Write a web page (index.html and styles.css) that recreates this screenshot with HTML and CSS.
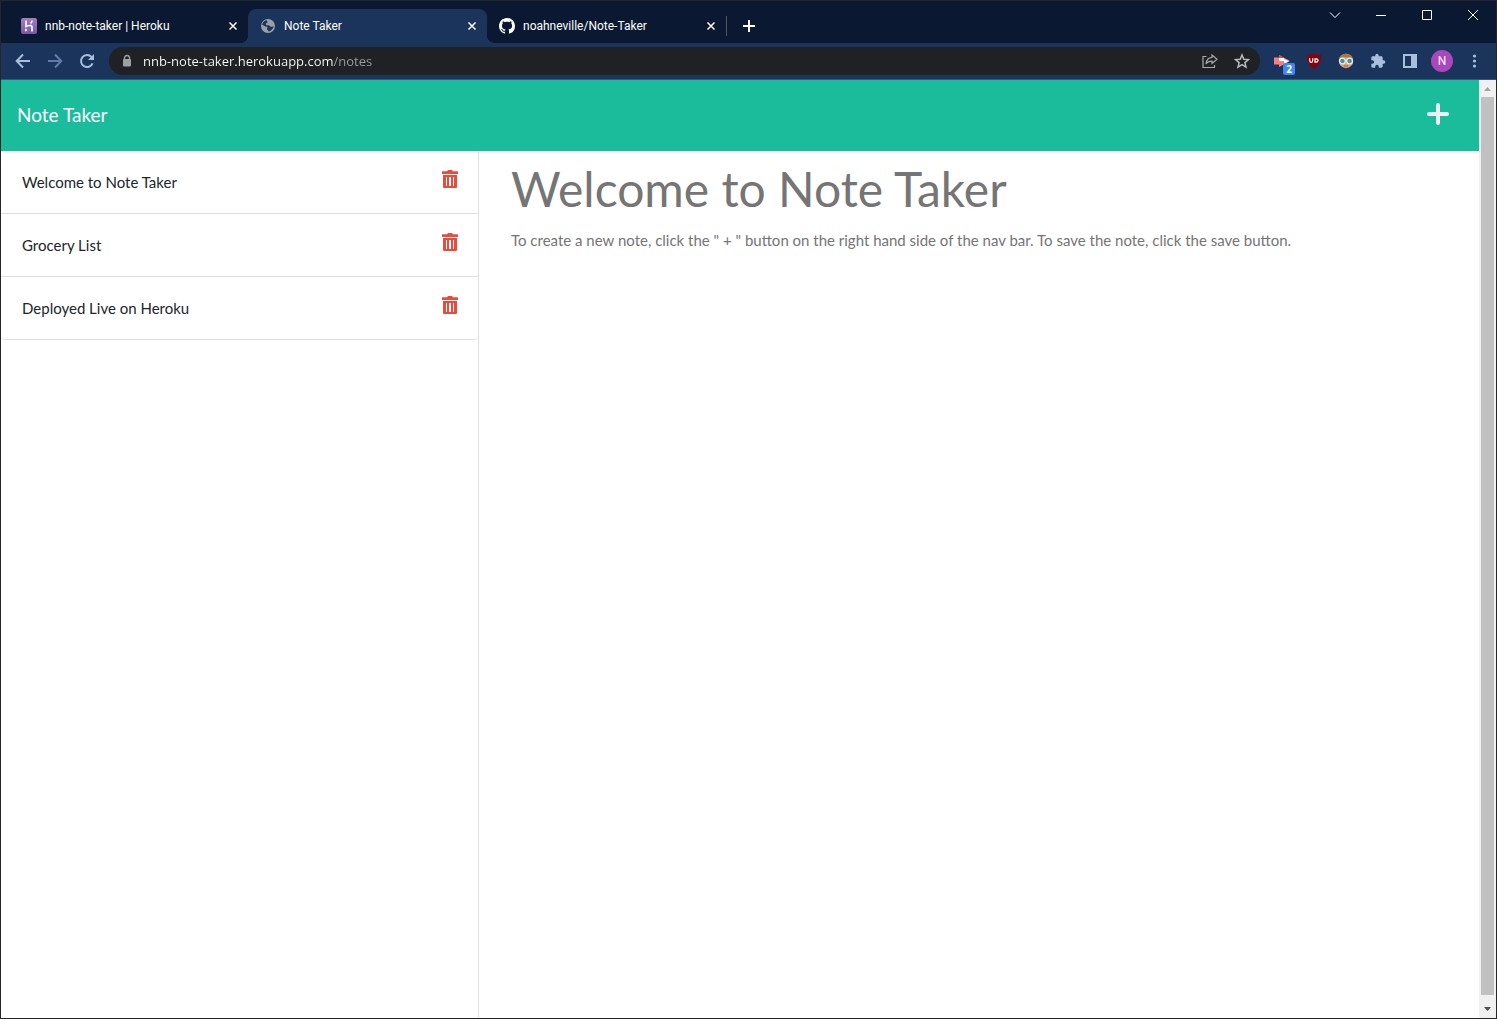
FILE: index.html
```html
<!DOCTYPE html>
<html lang="en">
<head>
<meta charset="utf-8">
<title>Note Taker</title>
<link rel="stylesheet" href="styles.css">
</head>
<body>
<div class="window">
  <header class="tab-strip">
    <div class="tabs">
      <div class="tab">
        <svg class="icon" viewBox="0 0 16 16"><defs><linearGradient id="hk" x1="0" y1="0" x2="0" y2="1"><stop offset="0" stop-color="#a37fc0"/><stop offset="1" stop-color="#79589f"/></linearGradient></defs><rect width="16" height="16" rx="2" fill="url(#hk)"/><path d="M5 2.500v6c1.500-.8 6-2.200 6 .5v4.500M11 2.500c0 1.200-.5 2-1.300 3" fill="none" stroke="#fff" stroke-width="1.600"/><path d="M4.200 10.300l2.300 1.700-2.300 1.700z" fill="#fff"/></svg>
        <span class="tab-title">nnb-note-taker | Heroku</span>
        <button class="tab-close" aria-label="Close tab"><svg viewBox="0 0 16 16"><path d="M4.500 4.500l7 7M11.500 4.500l-7 7"/></svg></button>
      </div>
      <div class="tab tab-active">
        <svg class="icon" viewBox="0 0 16 16"><circle cx="8" cy="8" r="7" fill="#9aa0a6"/><path d="M6.500 2.300c.3 1 1.200 1 1 1.900-.2.800-1.400.6-1.700 1.400-.2.700.5 1 .4 1.700H8.500c.9 0 1 .9 1.700 1.100.8.200 1.100 0 1.600.6.500-.5 1-.8 1.800-.7-.4 2.700-2.600 4.900-5.400 5.200v-1.300c-.6-.2-1.300-.5-1.200-1.400.1-.7.700-.9.500-1.500-.2-.7-1.200-.5-2-.9L2.200 6.700C2.700 4.500 4.300 2.800 6.500 2.300z" fill="#1a345b"/></svg>
        <span class="tab-title">Note Taker</span>
        <button class="tab-close" aria-label="Close tab"><svg viewBox="0 0 16 16"><path d="M4.500 4.500l7 7M11.500 4.500l-7 7"/></svg></button>
      </div>
      <div class="tab">
        <svg class="icon" viewBox="0 0 16 16"><path fill="#fff" d="M8 0C3.580 0 0 3.580 0 8c0 3.540 2.290 6.530 5.470 7.590.4.070.55-.17.55-.38 0-.19-.01-.82-.01-1.490-2.010.37-2.530-.49-2.690-.94-.09-.23-.48-.94-.82-1.130-.28-.15-.68-.52-.01-.53.63-.01 1.080.58 1.230.82.72 1.210 1.870.87 2.330.66.07-.52.28-.87.51-1.070-1.780-.2-3.640-.89-3.640-3.950 0-.87.31-1.590.82-2.150-.08-.2-.36-1.020.08-2.120 0 0 .67-.21 2.200.82.64-.18 1.320-.27 2-.27s1.360.09 2 .27c1.530-1.040 2.200-.82 2.200-.82.44 1.100.16 1.920.08 2.120.51.56.82 1.270.82 2.150 0 3.070-1.870 3.750-3.650 3.950.29.25.54.73.54 1.480 0 1.070-.01 1.930-.01 2.200 0 .21.15.46.55.38A8.010 8.010 0 0 0 16 8c0-4.420-3.580-8-8-8z"/></svg>
        <span class="tab-title">noahneville/Note-Taker</span>
        <button class="tab-close" aria-label="Close tab"><svg viewBox="0 0 16 16"><path d="M4.500 4.500l7 7M11.500 4.500l-7 7"/></svg></button>
      </div>
      <span class="tab-separator"></span>
      <button class="new-tab" aria-label="New tab"><svg viewBox="0 0 16 16"><path d="M8 2v12M2 8h12"/></svg></button>
    </div>
    <div class="window-controls">
      <button aria-label="Search tabs"><svg viewBox="0 0 12 12"><path d="M1 3.500l5 5 5-5"/></svg></button>
      <button aria-label="Minimize"><svg viewBox="0 0 12 12"><path d="M1 6.500h10"/></svg></button>
      <button aria-label="Maximize"><svg viewBox="0 0 12 12"><path d="M1.500 1.500h9v9h-9z"/></svg></button>
      <button aria-label="Close"><svg viewBox="0 0 12 12"><path d="M1 1l10 10M11 1L1 11"/></svg></button>
    </div>
  </header>

  <div class="toolbar">
    <div class="tools">
      <button aria-label="Back"><svg viewBox="0 0 16 16"><path d="M15 8H2M8 1.500L1.700 8 8 14.500" fill="none" stroke="#a9bfe0" stroke-width="2"/></svg></button>
      <button aria-label="Forward"><svg viewBox="0 0 16 16"><path d="M1 8h13M8 1.500L14.300 8 8 14.500" fill="none" stroke="#5f7ba6" stroke-width="2"/></svg></button>
      <button aria-label="Reload"><svg viewBox="0 0 16 16"><path d="M13.600 10.300A6 6 0 1 1 12.500 4" fill="none" stroke="#a9bfe0" stroke-width="2"/><path d="M15 1v6H9z" fill="#a9bfe0"/></svg></button>
    </div>
    <div class="omnibox">
      <svg class="lock" viewBox="0 0 10 14"><path d="M2.500 6V4a2.500 2.500 0 0 1 5 0v2" fill="none" stroke="#9aa0a6" stroke-width="1.400"/><rect x="1" y="5" width="8" height="7.500" rx="1" fill="#9aa0a6"/></svg>
      <input class="address" type="text" aria-label="Address" value="nnb-note-taker.herokuapp.com/notes">
      <div class="tools">
        <button aria-label="Share"><svg viewBox="0 0 16 16"><path d="M4.500 3.500H1v11h11.500V12M10 2l5 4.300-5 4.200V8.200c-3 0-4.800.8-6 2.800.3-3.500 2.200-6.200 6-6.600z" fill="none" stroke="#a6a9ad" stroke-width="1.200"/></svg></button>
        <button aria-label="Bookmark"><svg viewBox="0 0 16 16"><path d="M8 2l1.800 4.200 4.600.4-3.500 3 1.100 4.500L8 11.700l-4 2.400 1.100-4.500-3.500-3 4.600-.4z" fill="none" stroke="#b8babd" stroke-width="1.500"/></svg></button>
      </div>
    </div>
    <div class="tools">
      <button class="badged" aria-label="Extension, 2 notices"><svg viewBox="0 0 16 16"><path d="M0 4.500h5V2l11 6-11 6v-2.500H0z" fill="#f77f80"/><path d="M5 5h5v3H5zM10 6l5 2-5 3z" fill="#fff"/><path d="M5 2l5 3H5z" fill="#e04850"/></svg><span class="badge">2</span></button>
      <button aria-label="Content blocker"><svg viewBox="0 0 16 16"><path d="M8 0c2 1.300 4 1.800 7 1.800 0 6.700-.5 10.500-7 14.200C1.500 12.300 1 8.500 1 1.800 4 1.800 6 1.300 8 0z" fill="#800610"/><path d="M3.700 5.300v2.500q0 1.500 1.500 1.500t1.500-1.500V5.300M9 5.800h1q2 0 2 1.700t-2 1.700H9z" fill="none" stroke="#fff" stroke-width="1.200"/></svg></button>
      <button aria-label="Privacy extension"><svg viewBox="0 0 16 16"><circle cx="8" cy="8" r="7.200" fill="#dba178"/><path d="M1 7C1 3 4 .8 8 .8S15 3 15 7l-2-2.200C10 5 6 3.500 3 4.800z" fill="#a9793d"/><circle cx="4.400" cy="8" r="2.900" fill="#568b9c" stroke="#e2edf2" stroke-width="1.300"/><circle cx="11.600" cy="8" r="2.900" fill="#568b9c" stroke="#e2edf2" stroke-width="1.300"/><path d="M6 13h4" stroke="#a45d40" stroke-width="1"/></svg></button>
      <button aria-label="Extensions"><svg viewBox="0 0 24 24"><path fill="#a9bfe0" d="M20.500 11H19V7c0-1.100-.9-2-2-2h-4V3.500a2.500 2.500 0 0 0-5 0V5H4c-1.100 0-2 .9-2 2v3.800h1.500a2.700 2.700 0 0 1 0 5.400H2V20c0 1.100.9 2 2 2h3.800v-1.500a2.700 2.700 0 0 1 5.400 0V22H17c1.100 0 2-.9 2-2v-4h1.500a2.500 2.500 0 0 0 0-5z"/></svg></button>
      <button aria-label="Side panel"><svg viewBox="0 0 16 16"><path d="M1 1h14v14H1zM3 3v10h6V3z" fill="#a9bfe0" fill-rule="evenodd"/></svg></button>
      <button aria-label="Profile"><span class="avatar">N</span></button>
      <button aria-label="Menu"><svg viewBox="0 0 16 16"><g fill="#a9bfe0"><circle cx="8.500" cy="3" r="1.600"/><circle cx="8.500" cy="8" r="1.600"/><circle cx="8.500" cy="13" r="1.600"/></g></svg></button>
    </div>
  </div>

  <div class="viewport">
    <div class="page">
      <nav class="navbar">
        <a class="brand" href="#">Note Taker</a>
        <button class="add-note" aria-label="New note"><svg viewBox="0 0 22 22"><path d="M11 2v18M2 11h18" stroke="#ecf0f1" stroke-width="4" stroke-linecap="round"/></svg></button>
      </nav>
      <main class="content">
        <ul class="note-list">
          <li class="note"><a href="#">Welcome to Note Taker</a><button class="delete" aria-label="Delete note"><svg viewBox="0 0 16 19"><path fill="#e74c3c" fill-rule="evenodd" d="M5 1.200L6 0h4l1 1.200h5V4H0V1.200zM1 5h14v12q0 1-1 1H2q-1 0-1-1zM4 7v9h1V7zM7 7v9h2V7zM11 7v9h1V7z"/></svg></button></li>
          <li class="note"><a href="#">Grocery List</a><button class="delete" aria-label="Delete note"><svg viewBox="0 0 16 19"><path fill="#e74c3c" fill-rule="evenodd" d="M5 1.200L6 0h4l1 1.200h5V4H0V1.200zM1 5h14v12q0 1-1 1H2q-1 0-1-1zM4 7v9h1V7zM7 7v9h2V7zM11 7v9h1V7z"/></svg></button></li>
          <li class="note"><a href="#">Deployed Live on Heroku</a><button class="delete" aria-label="Delete note"><svg viewBox="0 0 16 19"><path fill="#e74c3c" fill-rule="evenodd" d="M5 1.200L6 0h4l1 1.200h5V4H0V1.200zM1 5h14v12q0 1-1 1H2q-1 0-1-1zM4 7v9h1V7zM7 7v9h2V7zM11 7v9h1V7z"/></svg></button></li>
        </ul>
        <section class="editor">
          <input class="note-title" type="text" aria-label="Note title" value="Welcome to Note Taker" readonly>
          <textarea class="note-text" aria-label="Note text" readonly>To create a new note, click the " + " button on the right hand side of the nav bar. To save the note, click the save button.</textarea>
        </section>
      </main>
    </div>
    <div class="scrollbar">
      <svg viewBox="0 0 17 17"><path d="M5 11h7L8.500 7z" fill="#a3a3a3"/></svg>
      <span class="thumb"></span>
      <svg viewBox="0 0 17 17"><path d="M5 6h7l-3.500 4z" fill="#505050"/></svg>
    </div>
  </div>
</div>
</body>
</html>
```
FILE: styles.css
```css
* {
  box-sizing: border-box;
}

body {
  margin: 0;
  font-family: Lato, sans-serif;
  font-size: 15px;
  color: #212529;
}

button {
  display: flex;
  align-items: center;
  justify-content: center;
  flex: none;
  padding: 0;
  border: 0;
  background: none;
  cursor: pointer;
}

svg {
  display: block;
  flex: none;
}

.window {
  display: flex;
  flex-direction: column;
  min-height: 100vh;
  border: 1px solid #25252a;
  background: #fff;
}

/* Tabs */
.tab-strip {
  display: flex;
  justify-content: space-between;
  height: 42px;
  background: #0a1931;
  font-family: Roboto, sans-serif;
}

.tabs {
  display: flex;
  align-items: center;
  padding: 8px 0 0 8px;
}

.tab {
  display: flex;
  align-items: center;
  gap: 8px;
  width: 239px;
  height: 34px;
  padding: 0 7px 0 12px;
  color: #fff;
  font-size: 12px;
}

.tab-active {
  position: relative;
  border-radius: 8px 8px 0 0;
  background: #1a345b;
}

.tab-active::before,
.tab-active::after {
  content: "";
  position: absolute;
  bottom: 0;
  width: 8px;
  height: 8px;
}

.tab-active::before {
  right: 100%;
  background: radial-gradient(circle at 0 0, transparent 8px, #1a345b 8px);
}

.tab-active::after {
  left: 100%;
  background: radial-gradient(circle at 100% 0, transparent 8px, #1a345b 8px);
}

.icon {
  width: 16px;
  height: 16px;
}

.tab-title {
  flex: 1;
  overflow: hidden;
  white-space: nowrap;
}

.tab-close svg,
.new-tab svg {
  width: 16px;
  height: 16px;
  stroke: #fff;
  stroke-width: 2;
}

.tab-close svg {
  stroke-width: 1.5;
}

.tab-separator {
  width: 1px;
  height: 20px;
  background: #4b5566;
}

.new-tab {
  width: 28px;
  height: 28px;
  margin-left: 8px;
}

.window-controls {
  display: flex;
}

.window-controls button {
  width: 46px;
  height: 28px;
}

.window-controls svg {
  width: 12px;
  height: 12px;
  fill: none;
  stroke: #fff;
}

/* Toolbar */
.toolbar {
  display: flex;
  align-items: center;
  gap: 6px;
  height: 37px;
  padding: 0 6px;
  border-bottom: 1px solid #3b527a;
  background: #1a345b;
}

.tools {
  display: flex;
}

.tools button {
  width: 32px;
  height: 28px;
}

.tools svg {
  width: 16px;
  height: 16px;
}

.omnibox {
  display: flex;
  align-items: center;
  flex: 1;
  height: 28px;
  padding: 0 2px 0 13px;
  border-radius: 14px;
  background: #202124;
}

.lock {
  width: 10px;
  height: 14px;
}

/* The host is bright, the path after it is dimmed */
.address {
  flex: 1;
  min-width: 0;
  margin-left: 11px;
  padding: 0;
  border: 0;
  outline: 0;
  background: linear-gradient(to right, #fff 190px, #9aa0a6 190px);
  background-clip: text;
  -webkit-background-clip: text;
  color: transparent;
  font: 13px/20px "Open Sans", sans-serif;
}

.badged {
  position: relative;
}

.badge {
  position: absolute;
  right: 3px;
  bottom: 0;
  width: 12px;
  border-radius: 2px;
  background: #4285f4;
  color: #fff;
  font: bold 10px/12px "Open Sans", sans-serif;
}

.avatar {
  width: 22px;
  border-radius: 50%;
  background: #ab47bc;
  color: #fff;
  font: 12px/22px Roboto, sans-serif;
}

/* Page */
.viewport {
  display: flex;
  flex: 1;
}

.page {
  display: flex;
  flex-direction: column;
  flex: 1;
}

.navbar {
  display: flex;
  align-items: center;
  justify-content: space-between;
  height: 71px;
  padding: 0 30px 3px 16px;
  background: #1abc9c;
}

.brand {
  color: #fff;
  font-size: 19px;
  text-decoration: none;
}

.add-note svg {
  width: 22px;
  height: 22px;
}

.content {
  display: grid;
  grid-template-columns: 478px 1fr;
  flex: 1;
}

.note-list {
  margin: 0;
  padding: 0;
  border-right: 1px solid #dfdfdf;
  list-style: none;
}

.note {
  display: flex;
  justify-content: space-between;
  padding: 19px 20px 19px 21px;
  border-bottom: 1px solid #dfdfdf;
}

.note:last-child {
  border-radius: 0 0 4px 4px;
}

.note a {
  color: #212529;
  line-height: 24px;
  text-decoration: none;
}

.delete {
  height: 19px;
}

.delete svg {
  width: 16px;
  height: 19px;
}

.editor {
  display: flex;
  flex-direction: column;
  gap: 11px;
  padding: 9px 32px;
}

.note-title,
.note-text {
  width: 100%;
  padding: 0;
  border: 0;
  outline: 0;
  background: none;
  color: #757575;
  font-family: Lato, sans-serif;
}

.note-title {
  font-size: 48px;
  line-height: 58px;
}

.note-text {
  flex: 1;
  font-size: 15px;
  line-height: 22px;
  resize: none;
}

/* Scrollbar */
.scrollbar {
  display: flex;
  flex-direction: column;
  width: 17px;
  background: #f1f1f1;
}

.scrollbar svg {
  width: 17px;
  height: 17px;
}

.thumb {
  flex: 1;
  margin: 0 2px 6px;
  background: #c1c1c1;
}
```
